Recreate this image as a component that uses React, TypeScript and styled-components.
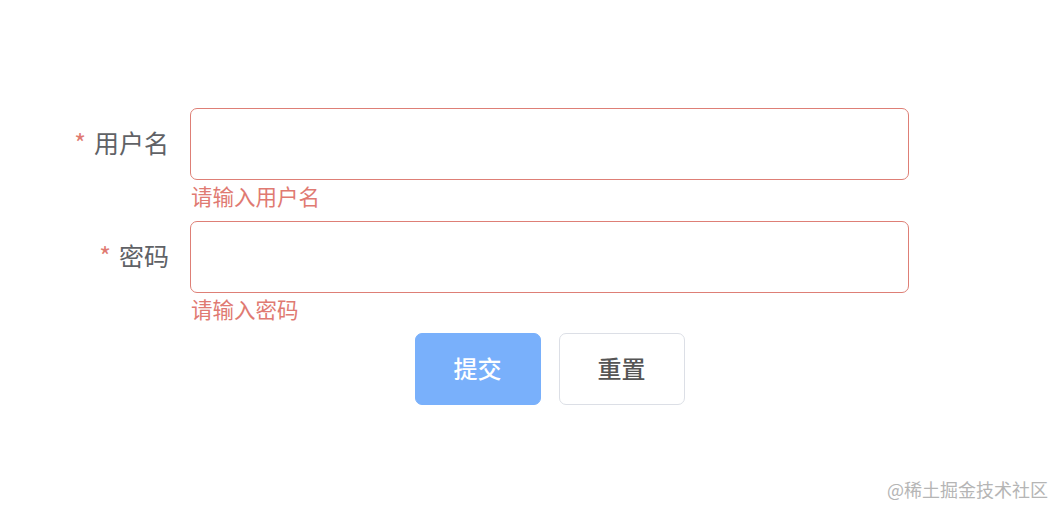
import React from 'react'
import styled, { createGlobalStyle } from 'styled-components'

const GlobalStyle = createGlobalStyle`
    body {
        margin: 0;
        background: #fff;
        font-family: "Noto Sans CJK SC", "Noto Sans", sans-serif;
    }
`

type Field = {
    label: string
    error: string
    type: string
}

const fields: Field[] = [
    { label: '用户名', error: '请输入用户名', type: 'text' },
    { label: '密码', error: '请输入密码', type: 'password' },
]

const App = () => {
    return (
        <Page>
            <GlobalStyle />
            <Form onSubmit={e => e.preventDefault()}>
                {fields.map(field => (
                    <Item key={field.label}>
                        <Label>
                            <Star>*</Star>
                            {field.label}
                        </Label>
                        <Content>
                            <Input type={field.type} />
                            <Error>{field.error}</Error>
                        </Content>
                    </Item>
                ))}
                <Actions>
                    <Button primary type="submit">提交</Button>
                    <Button type="button">重置</Button>
                </Actions>
            </Form>
            <Mark>@稀土掘金技术社区</Mark>
        </Page>
    )
}

export default App

const Page = styled.div`
    position: relative;
    height: 508px;
    padding-top: 108px;
    box-sizing: border-box;
`

const Form = styled.form`
    margin-left: 48px;
    width: 861px;
`

const Item = styled.div`
    display: flex;
    margin-bottom: 41px;
`

const Label = styled.label`
    width: 142px;
    flex-shrink: 0;
    box-sizing: border-box;
    padding-right: 21px;
    text-align: right;
    font-size: 25px;
    line-height: 68px;
    color: #606266;
`

const Star = styled.span`
    color: #e07a72;
    margin-right: 8px;
`

const Content = styled.div`
    position: relative;
    flex: 1;
`

const Input = styled.input`
    display: block;
    width: 100%;
    height: 72px;
    box-sizing: border-box;
    border: 1px solid #de7f76;
    border-radius: 7px;
    outline: none;
    padding: 0 26px;
    font-size: 24px;
    color: #606266;
    background: #fff;
`

const Error = styled.div`
    position: absolute;
    top: 100%;
    left: 1px;
    padding-top: 3px;
    font-size: 21.5px;
    line-height: 25px;
    color: #e07a72;
`

const Actions = styled.div`
    display: flex;
    justify-content: center;
    gap: 18px;
    padding-left: 142px;
    margin-top: -41px;
    padding-top: 40px;
`

const Button = styled.button<{ primary?: boolean }>`
    width: 126px;
    height: 72px;
    box-sizing: border-box;
    border-radius: 7px;
    border: 1px solid ${props => props.primary ? '#79b0fb' : '#dcdfe6'};
    background: ${props => props.primary ? '#79b0fb' : '#fff'};
    color: ${props => props.primary ? '#fff' : '#555'};
    font-family: "Noto Sans CJK SC", sans-serif;
    font-size: 24px;
    font-weight: 500;
    padding: 0 0 4px;
    cursor: pointer;
`

const Mark = styled.div`
    position: absolute;
    right: 8px;
    bottom: 6px;
    font-size: 18px;
    color: #b5b5b5;
`
